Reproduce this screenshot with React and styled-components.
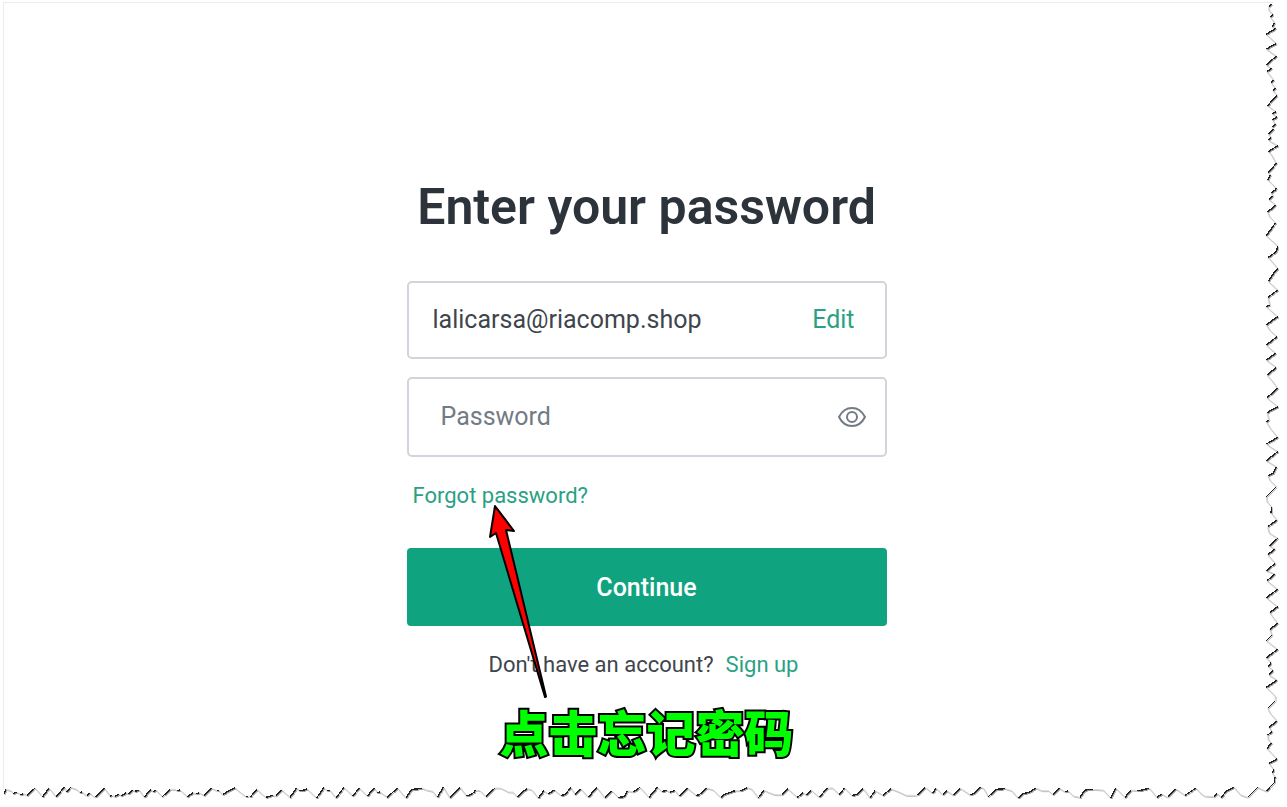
import React, { useState } from 'react';
import styled, { createGlobalStyle } from 'styled-components';

const color = {
  title: '#2d333a',
  text: '#3f454c',
  muted: '#737b84',
  border: '#d0d5db',
  green: '#10a37f',
  link: '#2aa184',
  edge: '#ececec',
};

const GlobalStyle = createGlobalStyle`
  * {
    box-sizing: border-box;
  }

  body {
    margin: 0;
    background: #fff;
    color: ${color.text};
    font-family: Roboto, 'Noto Sans CJK SC', sans-serif;
  }
`;

const Page = styled.div`
  position: relative;
  min-height: 100vh;
  padding: 2px 14px 0 3px;
  overflow: hidden;
`;

const Sheet = styled.main`
  display: flex;
  flex-direction: column;
  align-items: center;
  min-height: calc(100vh - 20px);
  padding: 172px 0 24px 16px;
  border-top: 1px solid ${color.edge};
  border-left: 1px solid ${color.edge};
`;

const Title = styled.h1`
  margin: 0 0 42px;
  color: ${color.title};
  font-size: 50px;
  font-weight: 600;
  line-height: 64px;
  text-align: center;
`;

const Form = styled.form`
  position: relative;
  display: flex;
  flex-direction: column;
  width: 100%;
  max-width: 480px;
`;

const Field = styled.div`
  display: flex;
  align-items: center;
  justify-content: space-between;
  height: ${({ $tall }) => ($tall ? 80 : 78)}px;
  margin-bottom: 18px;
  padding: ${({ $tall }) => ($tall ? '0 18px 0 32px' : '0 30px 0 24px')};
  border: 2px solid ${color.border};
  border-radius: 5px;
`;

const Input = styled.input`
  flex: 1;
  min-width: 0;
  padding: 0;
  border: 0;
  outline: 0;
  background: none;
  color: ${color.text};
  font-family: inherit;
  font-size: 25px;
  line-height: 32px;

  &::placeholder {
    color: ${color.muted};
    opacity: 1;
  }
`;

const Link = styled.a`
  color: ${color.link};
  font-size: ${({ $large }) => ($large ? 25 : 22)}px;
  line-height: 32px;
  text-decoration: none;
`;

const Forgot = styled(Link)`
  align-self: flex-start;
  margin: 5px 0 36px 6px;
`;

const EyeButton = styled.button`
  display: flex;
  padding: 0;
  border: 0;
  background: none;
  color: ${color.muted};
  cursor: pointer;
`;

const Submit = styled.button`
  height: 78px;
  border: 0;
  border-radius: 4px;
  background: ${color.green};
  color: #fff;
  font-family: inherit;
  font-size: 25px;
  font-weight: 500;
  cursor: pointer;
`;

const SignUp = styled.p`
  display: flex;
  justify-content: center;
  gap: 12px;
  margin: 23px 0 0;
  padding-right: 6px;
  font-size: 22px;
  line-height: 32px;
`;

const Arrow = styled.svg`
  position: absolute;
  top: 220px;
  left: 78px;
  width: 66px;
  height: 200px;
  pointer-events: none;
`;

const Note = styled.p`
  margin: 17px 0 0;
  color: #0f0;
  font-family: 'Noto Sans CJK SC', sans-serif;
  font-size: 49px;
  font-weight: 900;
  line-height: 66px;
  text-align: center;
  paint-order: stroke fill;
  -webkit-text-stroke: 4px #000;
`;

const Tear = styled.svg`
  position: absolute;
  pointer-events: none;
`;

const TearRight = styled(Tear)`
  top: 0;
  right: 0;
  width: 30px;
  height: 807px;
`;

const TearBottom = styled(Tear)`
  bottom: 0;
  left: 0;
  width: 1287px;
  height: 37px;
`;

const Lines = styled.g`
  filter: drop-shadow(2px 3px 2px #0006);
`;

// Torn edges, three units to a pixel: [x offset, y offset, points]
const rightEdge = [
  [
    -90,
    0,
    '135,12 125,20 126,32 138,42 130,52 135,58 143,68 136,80 146,85 118,103 148,130 118,147 148,168 118,195 134,205 120,215 140,240 132,248 145,265 138,272 150,285 122,317 146,335 137,342 150,350 137,360 145,372 134,382 140,388 125,402 132,412 124,420 152,437 124,455 132,462 148,490 124,518 130,525 123,540 148,564',
  ],
  [
    0,
    570,
    '55,0 42,8 48,18 36,28 56,45 32,66 38,80 56,98 28,137 62,168 58,185 34,202 62,235 50,250 34,274 62,300 33,322 38,345 28,350 62,380 28,404 38,420 60,440 28,465 56,490 28,510 58,532 30,555 45,572 62,595 30,623 62,650 30,668 36,690 28,695 40,715 62,742 28,762 62,785 28,812 58,830 48,850 33,858 38,870 58,890 28,920 30,935 44,950 42,968 60,990 32,1010 36,1028 62,1045 38,1068 54,1077 32,1094 55,1120 28,1142 54,1152 30,1172 62,1198 28,1223 62,1250 38,1268 62,1300 38,1318 45,1335 28,1352 62,1378 28,1403 42,1418 34,1430 48,1440 36,1455 60,1470 28,1492',
  ],
  [
    -210,
    2040,
    '265,48 265,62 242,85 250,100 270,123 246,142 256,155 242,165 244,180 254,188 240,205 270,237 246,250 260,268 256,280 264,290 262,308 248,322',
  ],
];

const bottomEdge = [
  [
    0,
    0,
    '12,70 18,58 33,62 40,70 52,66 62,75 70,70 82,76 105,54 128,80 147,54 168,80 193,52 200,65 212,52 230,58 240,68 246,66 262,78 268,68 284,82 314,55 330,78 337,76 345,80 356,72 365,78 378,68 386,72 398,60 405,64 418,60 433,82 452,58 460,65 468,60 487,80 510,58 525,58 530,62 540,60 562,80 580,68 588,72 598,68 612,76 635,55 650,62 655,60 668,74 682,65 705,54 737,80 745,78 752,80 770,58 797,82 812,78 818,75 828,78 845,60',
  ],
  [
    870,
    24,
    '0,58 20,30 28,38 45,36 50,32 80,60 102,28 110,38 120,37 138,60 162,28 188,54 208,30 232,54 253,30 262,44 270,42 292,58 322,30 348,60 365,34 390,32 394,30 410,36 428,40 442,58 460,28 480,60 510,28 530,54 550,46 556,36 570,38 588,56 615,30 632,30 655,42 668,42 682,56 710,32 725,35 745,60 762,38 775,48 793,36 812,52 826,50 842,28 855,50 872,32 895,58 920,28 945,60 965,38 985,58 1004,56 1012,38 1030,42 1050,28 1077,58 1102,28 1115,40 1130,38 1140,42 1155,38 1168,54 1192,30 1218,52 1228,50 1250,30 1270,36 1292,58 1306,48 1318,44 1335,38',
  ],
  [
    2220,
    24,
    '0,38 10,36 22,28 36,34 55,60 72,36 88,44 105,50 125,50 143,32 172,58 190,44 200,52 213,36 238,58 262,30 278,30 298,50 314,30 335,52 350,50 370,32 390,60 405,38 430,52 452,32 460,35 482,44 498,52 530,52 556,28 578,46 588,30 608,50 620,38 640,52 660,30 690,50 700,48 722,28 730,30 745,56 768,34 795,32 815,38 834,60 850,46 866,44 888,30 905,38 925,38 940,50 958,30 975,42 984,38 1000,54 1020,58 1035,36 1060,34 1090,36 1112,60 1127,30 1155,58 1173,36 1190,38 1208,36 1228,30 1250,58 1265,48 1283,58 1307,32 1335,52 1368,30 1380,44',
  ],
  [
    3561,
    -270,
    '52,348 80,350 90,340 102,352 120,332 142,322 160,344 182,352 212,322 238,334 248,322',
  ],
];

const toPoints = edge =>
  edge.flatMap(([dx, dy, points]) =>
    points.split(' ').map(point => {
      const [x, y] = point.split(',').map(Number);
      return [x + dx, y + dy];
    }),
  );

const toLines = (points, test) =>
  points
    .slice(1)
    .map((point, i) => (test(points[i], point) ? `M${points[i]}L${point}` : ''))
    .join('');

const rightPoints = toPoints(rightEdge);
const bottomPoints = toPoints(bottomEdge);

const TearLines = ({ points, isDark }) => (
  <Lines>
    <path
      d={toLines(points, (a, b) => !isDark(a, b))}
      stroke="#c4c4c4"
      strokeWidth="2"
    />
    <path
      d={toLines(points, isDark)}
      stroke="#222"
      strokeWidth="4"
      shapeRendering="crispEdges"
    />
  </Lines>
);

const App = () => {
  const [visible, setVisible] = useState(false);
  return (
    <Page>
      <GlobalStyle />
      <Sheet>
        <Title>Enter your password</Title>
        <Form onSubmit={event => event.preventDefault()}>
          <Field>
            <Input
              type="email"
              aria-label="Email address"
              value="lalicarsa@riacomp.shop"
              readOnly
            />
            <Link href="#edit" $large>
              Edit
            </Link>
          </Field>
          <Field $tall>
            <Input
              type={visible ? 'text' : 'password'}
              aria-label="Password"
              placeholder="Password"
            />
            <EyeButton
              type="button"
              aria-label="Show password"
              onClick={() => setVisible(!visible)}
            >
              <svg
                width="30"
                height="24"
                viewBox="0 0 30 24"
                fill="none"
                stroke="currentColor"
                strokeWidth="2"
              >
                <path d="M2 12C5 6 9.500 3 15 3s10 3 13 9c-3 6-7.500 9-13 9S5 18 2 12z" />
                <circle cx="15" cy="12" r="5" />
              </svg>
            </EyeButton>
          </Field>
          <Forgot href="#forgot">Forgot password?</Forgot>
          <Submit type="submit">Continue</Submit>
          <SignUp>
            Don't have an account? <Link href="#signup">Sign up</Link>
          </SignUp>
          <Arrow viewBox="0 0 66 200" aria-hidden="true">
            <path
              d="M10 5L29 30 21 29 61 195.500 60 196 11 32 5 36z"
              fill="#f00"
              stroke="#000"
              strokeWidth="2"
              strokeLinejoin="round"
            />
          </Arrow>
        </Form>
        <Note>点击忘记密码</Note>
      </Sheet>
      <TearRight viewBox="0 0 90 2421" fill="none" aria-hidden="true">
        <TearLines points={rightPoints} isDark={(a, b) => b[0] < a[0]} />
      </TearRight>
      <TearBottom viewBox="0 0 3861 111" fill="none" aria-hidden="true">
        <TearLines points={bottomPoints} isDark={(a, b) => b[1] < a[1]} />
      </TearBottom>
    </Page>
  );
};

export default App;
